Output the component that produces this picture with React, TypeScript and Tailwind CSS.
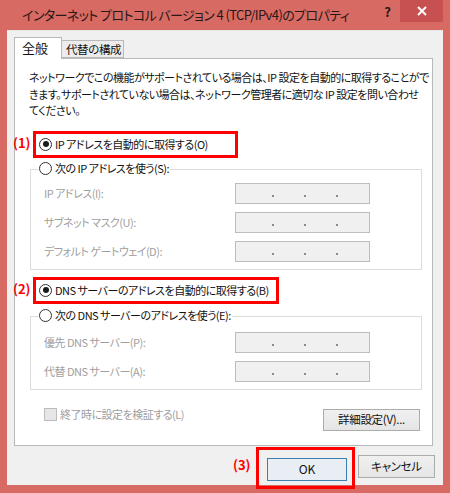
import React from "react"

const font = "font-['Noto_Sans_CJK_JP','Noto_Sans',sans-serif] [font-feature-settings:'palt']"

function Radio({ checked, label, disabled }: { checked?: boolean; label: string; disabled?: boolean }) {
  return (
    <div className="flex items-center gap-[3px] h-[14px]">
      <span className="w-[13px] h-[13px] rounded-full border border-[#333] bg-white flex items-center justify-center shrink-0">
        {checked && <span className="w-[6px] h-[6px] rounded-full bg-[#1a1a1a]" />}
      </span>
      <span className={`text-[11px] tracking-[-0.5px] leading-none whitespace-nowrap ${disabled ? "text-[#a0a0a0]" : "text-[#111]"}`}>{label}</span>
    </div>
  )
}

function IpBox() {
  return (
    <div className="w-[135px] h-[21px] border border-[#bdbdbd] bg-[#f0f0f0] flex items-end pb-[6px] pl-[36px] gap-[30px] shrink-0">
      <span className="w-[2px] h-[2px] bg-[#8a8a8a]" />
      <span className="w-[2px] h-[2px] bg-[#8a8a8a]" />
      <span className="w-[2px] h-[2px] bg-[#8a8a8a]" />
    </div>
  )
}

function Annotated({ n, children, w }: { n: string; children: React.ReactNode; w: string }) {
  return (
    <div className={`relative ml-[18px] h-[27px] border-[3px] border-[#ff0000] flex items-center pl-[3px] ${w}`}>
      <span className="absolute -left-[23px] top-[2px] text-[13px] font-bold text-[#ff0000] leading-none">{n}</span>
      {children}
    </div>
  )
}

function GroupBox({ label, rows, pt }: { label: string; rows: string[]; pt: string }) {
  return (
    <div className="ml-[15px] mr-[10px]">
      <div className="relative z-10 w-fit ml-[8px] px-[1px] bg-white">
        <Radio label={label} />
      </div>
      <div className={`-mt-[7px] border border-[#dcdcdc] pl-[13px] pb-[7px] flex flex-col gap-[8px] ${pt}`}>
        {rows.map((r) => (
          <div key={r} className="flex items-center">
            <span className="w-[191px] text-[11px] tracking-[-0.5px] text-[#a0a0a0] whitespace-nowrap">{r}</span>
            <IpBox />
          </div>
        ))}
      </div>
    </div>
  )
}

export default function App() {
  return (
    <div className={`w-[450px] h-[493px] bg-[#d76a63] flex flex-col ${font}`}>
      {/* タイトルバー */}
      <div className="h-[30px] flex items-start shrink-0">
        <span className="pl-[22px] pt-[6px] text-[13px] tracking-[-0.6px] leading-[18px] text-[#2a1716] whitespace-nowrap">
          インターネット プロトコル バージョン 4 (TCP/IPv4)のプロパティ
        </span>
        <span className="ml-auto pt-[5px] text-[13px] font-bold text-[#2a1716] leading-none">?</span>
        <div className="ml-[9px] mr-[7px] w-[43px] h-[22px] bg-[#c75050] flex items-center justify-center shrink-0">
          <svg width="10" height="10" viewBox="0 0 10 10">
            <path d="M1 1L9 9M9 1L1 9" stroke="white" strokeWidth="2" />
          </svg>
        </div>
      </div>

      {/* クライアント領域 */}
      <div className="mx-[7px] mb-[8px] flex-1 bg-[#f0f0f0] border-t border-[#e6e6e6] flex flex-col">
        <div className="flex items-end h-[27px] pl-[7px] shrink-0">
          <div className="w-[48px] h-[22px] bg-white border border-b-0 border-[#b9b9b9] text-[13px] pl-[7px] leading-[20px] text-[#111] relative top-[1px] z-10">
            全般
          </div>
          <div className="w-[62px] h-[18px] bg-[#ececec] border border-l-0 border-[#b9b9b9] text-[11.5px] tracking-[-0.4px] pl-[4px] leading-[16px] text-[#111] whitespace-nowrap">
            代替の構成
          </div>
        </div>

        <div className="ml-[7px] w-[419px] h-[388px] bg-white border border-[#b9b9b9] shrink-0 flex flex-col">
          <p className="ml-[14px] mt-[10px] text-[11px] tracking-[-0.5px] leading-[16.5px] text-[#111] whitespace-nowrap">
            ネットワークでこの機能がサポートされている場合は、IP 設定を自動的に取得することがで
            <br />
            きます。サポートされていない場合は、ネットワーク管理者に適切な IP 設定を問い合わせ
            <br />
            てください。
          </p>

          <div className="mt-[12px]">
            <Annotated n="(1)" w="w-[205px]">
              <Radio checked label="IP アドレスを自動的に取得する(O)" />
            </Annotated>
          </div>

          <div className="mt-[4px]">
            <GroupBox
              label="次の IP アドレスを使う(S):"
              rows={["IP アドレス(I):", "サブネット マスク(U):", "デフォルト ゲートウェイ(D):"]}
              pt="pt-[13px]"
            />
          </div>

          <div className="mt-[7px]">
            <Annotated n="(2)" w="w-[246px]">
              <Radio checked label="DNS サーバーのアドレスを自動的に取得する(B)" />
            </Annotated>
          </div>

          <div className="mt-[5px]">
            <GroupBox
              label="次の DNS サーバーのアドレスを使う(E):"
              rows={["優先 DNS サーバー(P):", "代替 DNS サーバー(A):"]}
              pt="pt-[15px]"
            />
          </div>

          <div className="mt-[19px] ml-[29px] mr-[12px] flex items-start justify-between">
            <div className="flex items-center gap-[3px] -mt-[1px]">
              <span className="w-[13px] h-[13px] border border-[#bcbcbc] bg-[#e6e6e6]" />
              <span className="text-[11px] tracking-[-0.5px] text-[#a0a0a0] leading-none">終了時に設定を検証する(L)</span>
            </div>
            <button className="w-[97px] h-[22px] border border-[#acacac] bg-gradient-to-b from-[#f0f0f0] to-[#e5e5e5] text-[11.5px] tracking-[-0.3px] text-[#111] leading-none">
              詳細設定(V)...
            </button>
          </div>
        </div>

        <div className="mt-[9px] flex justify-end gap-[11px] pr-[8px]">
          <div className="relative">
            <span className="absolute -left-[34px] top-[3px] text-[13px] font-bold text-[#ff0000] leading-none">(3)</span>
            <div className="absolute -left-[11px] -right-[8px] -top-[8px] -bottom-[8px] border-[3px] border-[#ff0000]" />
            <button className="w-[80px] h-[23px] border border-[#3c7fb1] bg-[#e8eef4] text-[12px] text-[#111] leading-none">
              OK
            </button>
          </div>
          <button className="w-[77px] h-[23px] border border-[#acacac] bg-gradient-to-b from-[#f0f0f0] to-[#e5e5e5] text-[11.5px] tracking-[-0.3px] text-[#111] leading-none">
            キャンセル
          </button>
        </div>
      </div>
    </div>
  )
}
